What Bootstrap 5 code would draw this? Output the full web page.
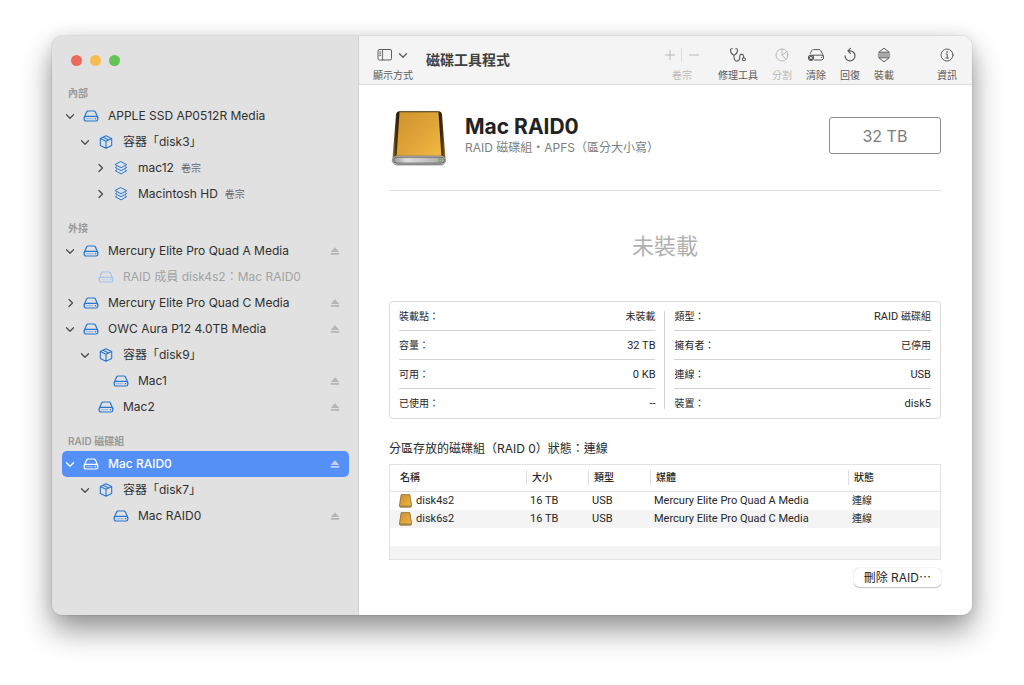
<!DOCTYPE html>
<html lang="zh-Hant">
<head>
<meta charset="utf-8">
<meta name="viewport" content="width=device-width, initial-scale=1">
<title>磁碟工具程式</title>
<link href="https://cdn.jsdelivr.net/npm/bootstrap@5.3.0/dist/css/bootstrap.min.css" rel="stylesheet">
<style>
  body { font-family: Inter, "Noto Sans CJK TC", sans-serif; font-size: 12px; line-height: 20px; color: #262626; background: #fff; padding: 36px 52px 70px; }
  button { font: inherit; color: inherit; background: none; border: 0; padding: 0; }
  svg { display: block; flex: none; }
  .line-icon { fill: none; stroke: currentColor; stroke-linecap: round; stroke-linejoin: round; }
  .app-window { min-height: calc(100vh - 106px); border-radius: 10px; box-shadow: 0 0 1px rgba(0,0,0,.5), 0 15px 30px rgba(0,0,0,.42), 0 0 16px rgba(0,0,0,.08); }
  .cjk { font-size: 10px; }

  .side { width: 307px; background: #e1e1e1; border-right: 1px solid #cfcfcf; padding: 18px 9px 18px 10px; }
  .dots { padding-left: 9px; gap: 8px; height: 13px; }
  .dots button { width: 11px; height: 11px; border-radius: 50%; }
  .side h2 { font-size: 10px; line-height: 20px; font-weight: 600; color: #999; margin: 0; padding-left: 6px; }
  .side section + section h2 { margin-top: 11px; }
  .tree-row { height: 26px; padding: 0 9px 0 2px; border-radius: 5px; }
  .tree-row.lv1 { padding-left: 17px; }
  .tree-row.lv2 { padding-left: 32px; }
  .tree-row a { color: #303030; text-decoration: none; gap: 9px; margin-left: 7px; }
  .tree-row a svg { color: #2577d4; }
  .tree-row .twist { width: 12px; color: #4d4d4d; }
  .tree-row .kind { font-size: 10px; color: #666; margin-left: -2px; }
  .tree-row.faded a { color: #a3a3a3; }
  .tree-row.faded a svg { color: #a5c3e8; }
  .tree-row .eject { color: #b5b5b5; }
  .tree-row.chosen { background: #5490f5; }
  .tree-row.chosen a, .tree-row.chosen a svg, .tree-row.chosen .twist { color: #fff; }
  .tree-row.chosen a { font-weight: 500; }
  .tree-row.chosen .eject { color: #c3cfe6; }

  .tools { background: #f4f4f4; border-bottom: 1px solid #dcdcdc; padding: 9px 15px 0 14px; height: 49px; gap: 14px; }
  .tools button, .pair { color: #5c5c5c; font-size: 10px; line-height: 20px; }
  .tools .glyph { height: 20px; }
  .tools .dim { color: #b8b8b8; }
  .tools h1 { font-size: 14px; line-height: 20px; font-weight: 700; color: #404040; margin: 5px 0 0 -1px; }
  .pair { width: 44px; }
  .pair .glyph { width: 36px; }
  .pair .glyph span { width: 1px; height: 14px; background: #dcdcdc; }
  .info-tool { margin-left: 29px; }

  .pane { padding: 25px 31px 28px 30px; }
  .vol-head { height: 81px; border-bottom: 1px solid #e0e0e0; gap: 18px; padding-left: 2px; }
  .vol-head h2 { font-size: 21px; line-height: 26px; font-weight: 700; margin: 0; color: #222; }
  .vol-head p { font-size: 12px; line-height: 16px; color: #808080; margin: 0; }
  .size-box { width: 112px; height: 37px; border: 1px solid #8c8c8c; border-radius: 3px; color: #7d7d7d; font-size: 16px; margin-top: 7px; }
  .status { font-size: 22px; line-height: 34px; color: #b0b0b0; margin: 38px 0; }
  .facts, .members { font-family: Roboto, "Noto Sans CJK TC", sans-serif; font-size: 11px; }
  .facts { border: 1px solid #d9d9d9; border-radius: 4px; padding: 0 9px; }
  .facts dl { margin: 0; }
  .facts dl > div { height: 29px; border-bottom: 1px solid #d3d3d3; padding-top: 1px; }
  .facts dl > div:last-child { border-bottom: 0; }
  .facts dt { font-size: 10px; font-weight: 400; }
  .facts dd { margin: 0; }
  .facts .rule { width: 1px; background: #d0d0d0; margin: 9px 9px; }
  .raid-title { font-size: 12px; line-height: 20px; font-weight: 400; margin: 20px 0 5px; }
  .members { border: 1px solid #e3e3e3; }
  .members table { width: 100%; table-layout: fixed; line-height: 18px; }
  .members th { height: 26px; font-size: 10px; font-weight: 500; border-bottom: 1px solid #e3e3e3; padding: 0; }
  .members th div { border-left: 1px solid #dedede; height: 15px; line-height: 15px; padding-left: 5px; }
  .members th:first-child div { border-left: 0; padding-left: 10px; }
  .members td { height: 18px; padding: 0 0 0 4px; white-space: nowrap; }
  .members td:first-child { padding-left: 9px; }
  .members tbody tr:nth-child(even) { background: #f4f4f4; }
  .members tbody tr:last-child td { height: 13px; }
  .col-name { width: 136px; } .col-size, .col-type { width: 62px; } .col-media { width: 36%; }
  .push { font-size: 12px; line-height: 19px; border-radius: 5px; background: #fff; padding: 0 10px; margin-top: 8px; box-shadow: 0 0 1px rgba(0,0,0,.35), 0 1px 1px rgba(0,0,0,.2); }
</style>
</head>
<body>
<svg width="0" height="0" class="position-absolute" aria-hidden="true">
  <defs>
    <symbol id="drive" viewBox="0 0 16 14"><path d="M1.200 8.600 3.600 3.100Q4 2 5.200 2h5.600Q12 2 12.400 3.100L14.800 8.600"/><rect x="1.200" y="7.300" width="13.600" height="4.700" rx="1.700"/><path d="M12.300 9.700h.4"/><path d="M3.500 9.700h6.500" stroke-opacity=".35"/></symbol>
    <symbol id="box" viewBox="0 0 16 14"><path d="M8 .8 13.700 3.500v6.900L8 13.200 2.300 10.400V3.500zM2.300 3.500 8 6.300l5.700-2.800M8 6.300v6.900M5.100 2.200l5.700 2.800"/></symbol>
    <symbol id="stack" viewBox="0 0 16 14"><path d="M8 .7 13.700 3.700 8 6.700 2.300 3.700zM3.700 5.800l-1.400.8L8 9.700l5.700-3.100-1.400-.8M3.700 8.900l-1.400.8L8 12.900l5.700-3.200-1.400-.8"/></symbol>
    <symbol id="down" viewBox="0 0 12 12"><path d="M2.500 4.700 6 8.200l3.500-3.500"/></symbol>
    <symbol id="right" viewBox="0 0 12 12"><path d="M5 2.500 8.500 6 5 9.500"/></symbol>
    <symbol id="out" viewBox="0 0 10 10"><path d="M5 1.200 9.200 6H.8zM.8 7h8.400v1.800H.8z" fill="currentColor"/></symbol>
    <linearGradient id="gold" x1="0" y1="0" x2="1" y2="1"><stop offset="0" stop-color="#d2942f"/><stop offset=".5" stop-color="#dea338"/><stop offset="1" stop-color="#f3bb42"/></linearGradient>
    <linearGradient id="edge"><stop offset="0" stop-color="#a87c28"/><stop offset=".06" stop-color="#4a350e"/><stop offset=".12" stop-color="#1f1607"/><stop offset=".88" stop-color="#1f1607"/><stop offset=".94" stop-color="#4a350e"/><stop offset="1" stop-color="#a87c28"/></linearGradient>
    <linearGradient id="metal"><stop offset="0" stop-color="#999"/><stop offset=".25" stop-color="#ddd"/><stop offset="1" stop-color="#aaa"/></linearGradient>
    <symbol id="goldDisk" viewBox="0 0 56 58"><rect x="2" y="47" width="52" height="9" rx="4.500" fill="#000" opacity=".18"/><path d="M8 1.500h40q2.500 0 3 3L54.500 48h-53L5 4.500q.5-3 3-3z" fill="url(#edge)"/><path d="M8.500 2h39l3 45h-45z" fill="url(#gold)"/><path d="M7.500 1.800h41" stroke="#604516" stroke-width="1"/><rect x="1.300" y="46" width="53.400" height="8.500" rx="4.200" fill="#eee" stroke="#777" stroke-width=".8"/><rect x="2.500" y="47.200" width="51" height="6" rx="3" fill="url(#metal)" stroke="#444" stroke-width=".8"/><circle cx="49" cy="50.200" r="1.500" fill="#a5d890" stroke="#54884a" stroke-width=".8"/></symbol>
    <symbol id="miniDisk" viewBox="0 0 12 13"><path d="M2 .6h8L11.500 10v1.300q0 .9-.9.9H1.400q-.9 0-.9-.9V10z" fill="url(#gold)" stroke="#8c6a2c" stroke-width=".8"/><path d="M.7 10.800h10.600v.8H.7z" fill="#77705f"/></symbol>
  </defs>
</svg>

<div class="app-window d-flex overflow-hidden">
  <aside class="side flex-shrink-0">
    <div class="dots d-flex align-items-center">
      <button type="button" aria-label="關閉" style="background:#ec695e"></button>
      <button type="button" aria-label="縮到最小" style="background:#f4be4f"></button>
      <button type="button" aria-label="放大" style="background:#61c454"></button>
    </div>
    <nav class="pt-3" aria-label="磁碟">
      <section>
        <h2>內部</h2>
        <div class="tree-row d-flex align-items-center"><button type="button" class="twist" aria-label="收合"><svg class="line-icon" width="12" height="12" stroke-width="1.3"><use href="#down"/></svg></button><a href="#" class="d-flex align-items-center"><svg class="line-icon" width="16" height="14" stroke-width="1.2"><use href="#drive"/></svg>APPLE SSD AP0512R Media</a></div>
        <div class="tree-row lv1 d-flex align-items-center"><button type="button" class="twist" aria-label="收合"><svg class="line-icon" width="12" height="12" stroke-width="1.3"><use href="#down"/></svg></button><a href="#" class="d-flex align-items-center"><svg class="line-icon" width="16" height="14" stroke-width="1.1"><use href="#box"/></svg>容器「disk3」</a></div>
        <div class="tree-row lv2 d-flex align-items-center"><button type="button" class="twist" aria-label="展開"><svg class="line-icon" width="12" height="12" stroke-width="1.3"><use href="#right"/></svg></button><a href="#" class="d-flex align-items-center"><svg class="line-icon" width="16" height="14" stroke-width="1"><use href="#stack"/></svg>mac12<span class="kind">卷宗</span></a></div>
        <div class="tree-row lv2 d-flex align-items-center"><button type="button" class="twist" aria-label="展開"><svg class="line-icon" width="12" height="12" stroke-width="1.3"><use href="#right"/></svg></button><a href="#" class="d-flex align-items-center"><svg class="line-icon" width="16" height="14" stroke-width="1"><use href="#stack"/></svg>Macintosh HD<span class="kind">卷宗</span></a></div>
      </section>
      <section>
        <h2>外接</h2>
        <div class="tree-row d-flex align-items-center"><button type="button" class="twist" aria-label="收合"><svg class="line-icon" width="12" height="12" stroke-width="1.3"><use href="#down"/></svg></button><a href="#" class="d-flex align-items-center"><svg class="line-icon" width="16" height="14" stroke-width="1.2"><use href="#drive"/></svg>Mercury Elite Pro Quad A Media</a><button type="button" class="eject ms-auto" aria-label="退出"><svg width="10" height="10"><use href="#out"/></svg></button></div>
        <div class="tree-row lv1 faded d-flex align-items-center"><span class="twist"></span><a href="#" class="d-flex align-items-center"><svg class="line-icon" width="16" height="14" stroke-width="1.2"><use href="#drive"/></svg>RAID 成員 disk4s2：Mac RAID0</a></div>
        <div class="tree-row d-flex align-items-center"><button type="button" class="twist" aria-label="展開"><svg class="line-icon" width="12" height="12" stroke-width="1.3"><use href="#right"/></svg></button><a href="#" class="d-flex align-items-center"><svg class="line-icon" width="16" height="14" stroke-width="1.2"><use href="#drive"/></svg>Mercury Elite Pro Quad C Media</a><button type="button" class="eject ms-auto" aria-label="退出"><svg width="10" height="10"><use href="#out"/></svg></button></div>
        <div class="tree-row d-flex align-items-center"><button type="button" class="twist" aria-label="收合"><svg class="line-icon" width="12" height="12" stroke-width="1.3"><use href="#down"/></svg></button><a href="#" class="d-flex align-items-center"><svg class="line-icon" width="16" height="14" stroke-width="1.2"><use href="#drive"/></svg>OWC Aura P12 4.0TB Media</a><button type="button" class="eject ms-auto" aria-label="退出"><svg width="10" height="10"><use href="#out"/></svg></button></div>
        <div class="tree-row lv1 d-flex align-items-center"><button type="button" class="twist" aria-label="收合"><svg class="line-icon" width="12" height="12" stroke-width="1.3"><use href="#down"/></svg></button><a href="#" class="d-flex align-items-center"><svg class="line-icon" width="16" height="14" stroke-width="1.1"><use href="#box"/></svg>容器「disk9」</a></div>
        <div class="tree-row lv2 d-flex align-items-center"><span class="twist"></span><a href="#" class="d-flex align-items-center"><svg class="line-icon" width="16" height="14" stroke-width="1.2"><use href="#drive"/></svg>Mac1</a><button type="button" class="eject ms-auto" aria-label="退出"><svg width="10" height="10"><use href="#out"/></svg></button></div>
        <div class="tree-row lv1 d-flex align-items-center"><span class="twist"></span><a href="#" class="d-flex align-items-center"><svg class="line-icon" width="16" height="14" stroke-width="1.2"><use href="#drive"/></svg>Mac2</a><button type="button" class="eject ms-auto" aria-label="退出"><svg width="10" height="10"><use href="#out"/></svg></button></div>
      </section>
      <section>
        <h2>RAID 磁碟組</h2>
        <div class="tree-row chosen d-flex align-items-center"><button type="button" class="twist" aria-label="收合"><svg class="line-icon" width="12" height="12" stroke-width="1.3"><use href="#down"/></svg></button><a href="#" class="d-flex align-items-center" aria-current="true"><svg class="line-icon" width="16" height="14" stroke-width="1.2"><use href="#drive"/></svg>Mac RAID0</a><button type="button" class="eject ms-auto" aria-label="退出"><svg width="10" height="10"><use href="#out"/></svg></button></div>
        <div class="tree-row lv1 d-flex align-items-center"><button type="button" class="twist" aria-label="收合"><svg class="line-icon" width="12" height="12" stroke-width="1.3"><use href="#down"/></svg></button><a href="#" class="d-flex align-items-center"><svg class="line-icon" width="16" height="14" stroke-width="1.1"><use href="#box"/></svg>容器「disk7」</a></div>
        <div class="tree-row lv2 d-flex align-items-center"><span class="twist"></span><a href="#" class="d-flex align-items-center"><svg class="line-icon" width="16" height="14" stroke-width="1.2"><use href="#drive"/></svg>Mac RAID0</a><button type="button" class="eject ms-auto" aria-label="退出"><svg width="10" height="10"><use href="#out"/></svg></button></div>
      </section>
    </nav>
  </aside>

  <main class="flex-grow-1 bg-white">
    <header class="tools d-flex align-items-start">
      <button type="button"><span class="glyph d-flex align-items-center justify-content-center gap-1">
        <svg class="line-icon" width="16" height="14" viewBox="0 0 16 14"><rect x="1" y="1.500" width="13.500" height="10.500" rx="1.500"/><path d="M5.600 1.500V12M2.600 4h1.200M2.600 5.800h1.200M2.600 7.600h1.200" stroke-width=".9"/></svg>
        <svg class="line-icon" width="12" height="12" stroke-width="1.300"><use href="#down"/></svg></span>顯示方式</button>
      <h1>磁碟工具程式</h1>
      <div class="pair dim d-flex flex-column align-items-center ms-auto">
        <div class="glyph d-flex align-items-center justify-content-between">
          <button type="button" class="dim" aria-label="加入卷宗"><svg class="line-icon" width="12" height="12" viewBox="0 0 12 12"><path d="M6 1.500v9M1.500 6h9"/></svg></button>
          <span></span>
          <button type="button" class="dim" aria-label="移除卷宗"><svg class="line-icon" width="12" height="12" viewBox="0 0 12 12"><path d="M1.500 6h9"/></svg></button>
        </div>卷宗
      </div>
      <button type="button"><span class="glyph d-flex align-items-center justify-content-center">
        <svg class="line-icon" width="18" height="16" viewBox="0 0 18 16" stroke-width="1.100"><path d="M3.300 1.800H2.500Q1.300 1.900 1.500 3.500 2 7.300 5 8.300 8 7.300 8.500 3.500 8.700 1.900 7.500 1.800H6.700M5 8.300v1.900q.2 3.800 3 3.900 2.600-.2 2.700-3.400V9.200q.2-2 1.900-2.100 1.800.2 2 2.300v1.300"/><circle cx="14.900" cy="12.300" r="1.500"/></svg></span>修理工具</button>
      <button type="button" class="dim"><span class="glyph d-flex align-items-center justify-content-center">
        <svg class="line-icon" width="14" height="14" viewBox="0 0 14 14"><circle cx="7" cy="7" r="6"/><path d="M7 1v6l3.900 4.200M7 7l4.900-3.300"/></svg></span>分割</button>
      <button type="button"><span class="glyph d-flex align-items-center justify-content-center">
        <svg class="line-icon" width="18" height="14" viewBox="0 0 18 14"><path d="M3.200 5.500 4.700 2.700Q5.200 1.600 6.400 1.600h5.700q1.200 0 1.700 1.100L16.300 7.500q1 4.100-1.500 4.500H7.500M5.500 7.200h9.500q1.500.2 1.500 2.200M14.600 9.600h.1"/><circle cx="4" cy="9.800" r="3.100" fill="#5c5c5c" stroke="none"/><path d="m3 8.800 2 2m0-2-2 2" stroke="#f4f4f4" stroke-width=".9"/></svg></span>清除</button>
      <button type="button"><span class="glyph d-flex align-items-center justify-content-center">
        <svg class="line-icon" width="14" height="16" viewBox="0 0 14 16" stroke-width="1.200"><path d="M2 8.800a5 5 0 1 0 5-5H5M7.400 1.300 4.900 3.800l2.500 2.500"/></svg></span>回復</button>
      <button type="button"><span class="glyph d-flex align-items-center justify-content-center">
        <svg class="line-icon" width="14" height="16" viewBox="0 0 14 16" stroke-width="1"><path d="M2 5 7 1.200 12 5zM2 11l5 3.800L12 11zM1.200 7h11.600M1.200 9h11.600"/></svg></span>裝載</button>
      <button type="button" class="info-tool"><span class="glyph d-flex align-items-center justify-content-center">
        <svg class="line-icon" width="14" height="14" viewBox="0 0 14 14"><circle cx="7" cy="7" r="6"/><path d="M6 6.100h1.200V10M5.800 10h2.700"/><circle cx="7" cy="4" r=".3"/></svg></span>資訊</button>
    </header>

    <div class="pane">
      <div class="vol-head d-flex align-items-start">
        <svg width="56" height="58"><use href="#goldDisk"/></svg>
        <div class="flex-grow-1 pt-1">
          <h2>Mac RAID0</h2>
          <p>RAID 磁碟組・APFS（區分大小寫）</p>
        </div>
        <div class="size-box d-flex align-items-center justify-content-center">32 TB</div>
      </div>
      <p class="status text-center">未裝載</p>

      <div class="facts d-flex">
        <dl class="flex-fill w-50">
          <div class="d-flex align-items-center justify-content-between"><dt>裝載點：</dt><dd class="cjk">未裝載</dd></div>
          <div class="d-flex align-items-center justify-content-between"><dt>容量：</dt><dd>32 TB</dd></div>
          <div class="d-flex align-items-center justify-content-between"><dt>可用：</dt><dd>0 KB</dd></div>
          <div class="d-flex align-items-center justify-content-between"><dt>已使用：</dt><dd>--</dd></div>
        </dl>
        <div class="rule"></div>
        <dl class="flex-fill w-50">
          <div class="d-flex align-items-center justify-content-between"><dt>類型：</dt><dd>RAID <span class="cjk">磁碟組</span></dd></div>
          <div class="d-flex align-items-center justify-content-between"><dt>擁有者：</dt><dd class="cjk">已停用</dd></div>
          <div class="d-flex align-items-center justify-content-between"><dt>連線：</dt><dd>USB</dd></div>
          <div class="d-flex align-items-center justify-content-between"><dt>裝置：</dt><dd>disk5</dd></div>
        </dl>
      </div>

      <h3 class="raid-title">分區存放的磁碟組（RAID 0）狀態：連線</h3>
      <div class="members">
        <table>
          <colgroup><col class="col-name"><col class="col-size"><col class="col-type"><col class="col-media"><col></colgroup>
          <thead><tr><th><div>名稱</div></th><th><div>大小</div></th><th><div>類型</div></th><th><div>媒體</div></th><th><div>狀態</div></th></tr></thead>
          <tbody>
            <tr><td><div class="d-flex align-items-center gap-1"><svg width="13" height="14"><use href="#miniDisk"/></svg>disk4s2</div></td><td>16 TB</td><td>USB</td><td>Mercury Elite Pro Quad A Media</td><td class="cjk">連線</td></tr>
            <tr><td><div class="d-flex align-items-center gap-1"><svg width="13" height="14"><use href="#miniDisk"/></svg>disk6s2</div></td><td>16 TB</td><td>USB</td><td>Mercury Elite Pro Quad C Media</td><td class="cjk">連線</td></tr>
            <tr><td colspan="5"></td></tr>
            <tr><td colspan="5"></td></tr>
          </tbody>
        </table>
      </div>
      <div class="d-flex justify-content-end"><button type="button" class="push">刪除 RAID⋯</button></div>
    </div>
  </main>
</div>
<script src="https://cdn.jsdelivr.net/npm/bootstrap@5.3.0/dist/js/bootstrap.bundle.min.js"></script>
</body>
</html>
